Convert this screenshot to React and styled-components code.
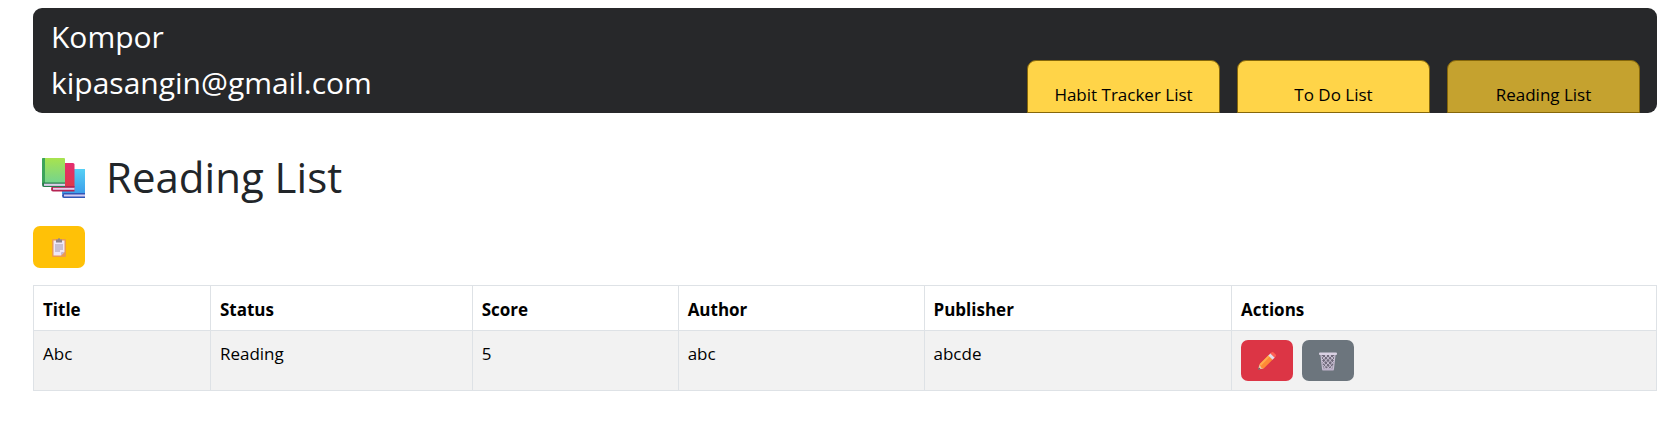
import React from "react";
import styled, { createGlobalStyle } from "styled-components";

const GlobalStyle = createGlobalStyle`
  *, *::before, *::after { box-sizing: border-box; }
  body {
    margin: 0;
    background: #fff;
    color: #212529;
    font-family: "Segoe UI", "Open Sans", "Noto Sans", sans-serif;
    font-size: 17px;
    line-height: 27px;
  }
`;

const Page = styled.div`
  padding: 8px 12px 24px 33px;
`;

const Header = styled.header`
  display: flex;
  justify-content: space-between;
  align-items: flex-end;
  padding: 0 17px 0 18px;
  border-radius: 9px;
  background: #27282a;
`;

const Account = styled.div`
  padding: 6px 0 7px;
  color: #fff;
  font-size: 30px;
  line-height: 46px;

  p { margin: 0; }
`;

const Tabs = styled.nav`
  display: flex;
  gap: 17px;
`;

const Tab = styled.a`
  width: 193px;
  height: 53px;
  padding-top: 20px;
  border: 1px solid #86670a;
  border-radius: 9px 9px 0 0;
  background: ${({ $active }) => ($active ? "#c5a22f" : "#ffd448")};
  color: #000;
  text-align: center;
  text-decoration: none;
  white-space: nowrap;
`;

const Heading = styled.h1`
  display: flex;
  align-items: center;
  gap: 20px;
  margin: 37px 0 22px;
  padding-left: 9px;
  font-size: 42px;
  font-weight: 400;
  line-height: 54px;
`;

const IconButton = styled.button`
  display: inline-flex;
  align-items: center;
  justify-content: center;
  width: 52px;
  height: ${({ $tall }) => ($tall ? "42px" : "41px")};
  padding: 0;
  border: 0;
  border-radius: 7px;
  background: ${({ $color }) => $color};
  cursor: pointer;
`;

const Toolbar = styled.div`
  display: flex;
  margin: 0 0 17px;
`;

const Actions = styled.div`
  display: flex;
  gap: 9px;
`;

const Table = styled.table`
  width: 100%;
  table-layout: fixed;
  border-collapse: collapse;
  color: #000;
`;

const Column = styled.col`
  width: ${({ $share }) => $share}%;
`;

const HeadCell = styled.th`
  padding: 10px 9px 7px;
  border: 1px solid #dee2e6;
  font-weight: 700;
  text-align: left;
`;

const Cell = styled.td`
  padding: 9px;
  border: 1px solid #dee2e6;
  background: #f2f2f2;
  vertical-align: top;
`;

const Books = () => (
  <svg width="44" height="41" viewBox="0 0 44 41" aria-hidden="true">
    <defs>
      <linearGradient id="green" x1="0" y1="0" x2="0" y2="1">
        <stop offset="0" stopColor="#a8e34e" />
        <stop offset="1" stopColor="#72d391" />
      </linearGradient>
      <linearGradient id="red" x1="0" y1="0" x2="0" y2="1">
        <stop offset="0" stopColor="#e42d70" />
        <stop offset="1" stopColor="#e03a46" />
      </linearGradient>
      <linearGradient id="blue" x1="0" y1="0" x2="0" y2="1">
        <stop offset="0" stopColor="#56d0f5" />
        <stop offset="1" stopColor="#3c9dea" />
      </linearGradient>
    </defs>
    <path d="M20 12h23v25H20z" fill="url(#blue)" />
    <path d="M22 36h21v5H22q-2 0-2-2.500t2-2.500z" fill="#3157b7" />
    <path d="M22 37.500h21v2H22z" fill="#d7ccf2" />
    <path d="M9 6h22q1.500 0 1.500 1.500V30H9z" fill="url(#red)" />
    <path d="M11 29h21.500v5.500H11q-2 0-2-2.500t2-3z" fill="#b52352" />
    <path d="M11 30.800h21.500v2H11z" fill="#e6ccec" />
    <path d="M0 2q0-1 1-1h21q1 0 1 1v25H0z" fill="url(#green)" />
    <path d="M0 2q0-1 1-1h2v26H0z" fill="#3ca45b" />
    <path d="M2 25.500h21V30H2q-2 0-2-2.300t2-2.200z" fill="#287b4c" />
    <path d="M2 26.700h21v2.200H2z" fill="#dccdea" />
  </svg>
);

const Clipboard = () => (
  <svg width="18" height="20" viewBox="0 0 18 20" aria-hidden="true">
    <rect x="2" y="2" width="14" height="18" rx="1" fill="#eb9b51" />
    <path d="M3.500 3.500h11V15l-3.500 3.500H3.500z" fill="#eee7f8" />
    <path d="M14.500 15H12q-1 0-1 1v2.500z" fill="#c7b7d0" />
    <path d="M6 5.500V2.500h2q0-1.500 1-1.500t1 1.500h2v3z" fill="#8e858d" />
    <path d="M5 8h8M5 10h8M5 12h8M5 14h5" stroke="#9b91a8" strokeWidth="0.900" />
  </svg>
);

const Pencil = () => (
  <svg width="20" height="20" viewBox="0 0 20 20" aria-hidden="true">
    <path d="M1 18.500l1.500-5 4 4z" fill="#edc5a4" />
    <path d="M1 18.700l.7-2.300 1.800 1.500z" fill="#584d57" />
    <path d="M2.500 13.300L11.500 4.300l4.200 4.200-9 9-2.200-.5z" fill="#ff8a36" />
    <path d="M2.500 13.300L11.500 4.300l1.300 1.300-9 9.300z" fill="#ffac4c" />
    <path d="M11.300 4.500l2.300-2.300 4.200 4.200-2.300 2.300z" fill="#e2dce9" />
    <path d="M13.400 2.400l1-1q1-1 2.200 0l2 2q1 1 0 2l-1 1z" fill="#ff5e52" />
  </svg>
);

const Bin = () => (
  <svg width="18" height="20" viewBox="0 0 18 20" aria-hidden="true">
    <path d="M1.500 3h15L14.800 19H3.200z" fill="#716b7c" />
    <path
      d="M3 5l10.500 12M6 4l8.500 9M10 4l5 5M3 10l7.500 8M4 14l3 4M15 5L4.500 17M12 4L3.500 13M8 4L3 9M15 10L8 18M14.500 14L11 18"
      stroke="#d3cadd"
      strokeWidth="0.900"
      fill="none"
    />
    <path d="M2 3.500L3.600 18h10.800L16 3.500" stroke="#c9c0d4" strokeWidth="1.200" fill="none" />
    <rect x="0" y="1.500" width="18" height="2.500" rx="1" fill="#d9d1e3" />
    <rect x="3" y="17.500" width="12" height="2" rx="1" fill="#bdb2ca" />
  </svg>
);

const tabs = ["Habit Tracker List", "To Do List", "Reading List"];

const columns = [
  { label: "Title", share: 10.9 },
  { label: "Status", share: 16.13 },
  { label: "Score", share: 12.69 },
  { label: "Author", share: 15.15 },
  { label: "Publisher", share: 18.95 },
  { label: "Actions", share: 26.18 },
];

const books = [
  { title: "Abc", status: "Reading", score: 5, author: "abc", publisher: "abcde" },
];

export default function App() {
  return (
    <>
      <GlobalStyle />
      <Page>
        <Header>
          <Account>
            <p>Kompor</p>
            <p>kipasangin@gmail.com</p>
          </Account>
          <Tabs>
            {tabs.map((label) => (
              <Tab
                key={label}
                href="#"
                $active={label === "Reading List"}
                aria-current={label === "Reading List" ? "page" : undefined}
              >
                {label}
              </Tab>
            ))}
          </Tabs>
        </Header>
        <main>
          <Heading>
            <Books />
            Reading List
          </Heading>
          <Toolbar>
            <IconButton $color="#ffc107" $tall aria-label="Add book">
              <Clipboard />
            </IconButton>
          </Toolbar>
          <Table>
            <colgroup>
              {columns.map(({ label, share }) => (
                <Column key={label} $share={share} />
              ))}
            </colgroup>
            <thead>
              <tr>
                {columns.map(({ label }) => (
                  <HeadCell key={label} scope="col">{label}</HeadCell>
                ))}
              </tr>
            </thead>
            <tbody>
              {books.map((book) => (
                <tr key={book.title}>
                  <Cell>{book.title}</Cell>
                  <Cell>{book.status}</Cell>
                  <Cell>{book.score}</Cell>
                  <Cell>{book.author}</Cell>
                  <Cell>{book.publisher}</Cell>
                  <Cell>
                    <Actions>
                      <IconButton $color="#dc3545" aria-label="Edit book">
                        <Pencil />
                      </IconButton>
                      <IconButton $color="#6c757d" aria-label="Delete book">
                        <Bin />
                      </IconButton>
                    </Actions>
                  </Cell>
                </tr>
              ))}
            </tbody>
          </Table>
        </main>
      </Page>
    </>
  );
}
